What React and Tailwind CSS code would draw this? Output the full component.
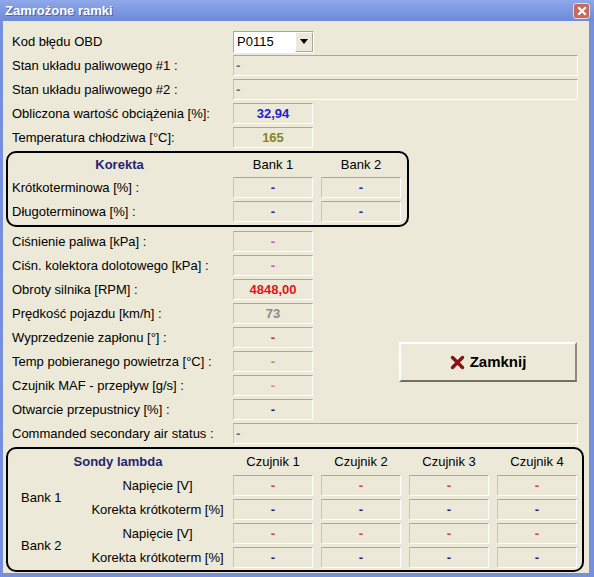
const Box = ({ children, className = '', w = 'w-[80px]', left = false }) => (
  <div
    className={`${w} h-[21px] shrink-0 flex items-center ${left ? 'justify-start pl-[2px]' : 'justify-center'} border border-t-[#aca899] border-l-[#c9c6b5] border-b-white border-r-white bg-[#ece9d8] font-bold text-[13px] ${className}`}
  >
    {children}
  </div>
);

const Row = ({ label, children }) => (
  <div className="flex items-center h-[21px]">
    <div className="w-[221px] shrink-0 whitespace-nowrap">{label}</div>
    {children}
  </div>
);

const dash = '-';

const mainRows = [
  { label: 'Ciśnienie paliwa [kPa] :', value: dash, color: 'text-[#c84bc8]' },
  { label: 'Ciśn. kolektora dolotowego [kPa] :', value: dash, color: 'text-[#c84bc8]' },
  { label: 'Obroty silnika [RPM] :', value: '4848,00', color: 'text-[#e0141c]' },
  { label: 'Prędkość pojazdu [km/h] :', value: '73', color: 'text-[#8a8a8a]' },
  { label: 'Wyprzedzenie zapłonu [°] :', value: dash, color: 'text-[#d02828]' },
  { label: 'Temp pobieranego powietrza [°C] :', value: dash, color: 'text-[#9a9a4a]' },
  { label: 'Czujnik MAF - przepływ [g/s] :', value: dash, color: 'text-[#e8884a]' },
  { label: 'Otwarcie przepustnicy [%] :', value: dash, color: 'text-[#1e1e8a]' },
];

const App = () => {
  return (
    <div className="w-[594px] h-[577px] bg-[#7591de] font-['Liberation_Sans',Arial,sans-serif] text-[13px] text-black overflow-hidden flex flex-col">
      {/* title bar */}
      <div className="h-[21px] shrink-0 flex items-center justify-between bg-gradient-to-b from-[#8ea8ea] to-[#6e8ad9] pl-[5px] pr-[4px]">
        <span className="text-white font-bold text-[13px] [text-shadow:1px_1px_0_#4a63b0]">Zamrożone ramki</span>
        <div className="w-[17px] h-[16px] rounded-[3px] border border-[#e8d8e0] bg-[#c66a5c] flex items-center justify-center">
          <svg width="10" height="10" viewBox="0 0 10 10">
            <path d="M2 2 L8 8 M8 2 L2 8" stroke="white" strokeWidth="2.2" strokeLinecap="square" />
          </svg>
        </div>
      </div>

      {/* body */}
      <div className="flex-1 ml-[3px] mr-[5px] mb-[4px] bg-[#ece9d8] pl-[9px] pt-[10px] flex flex-col">
        <div className="flex flex-col gap-[3px]">
          <Row label="Kod błędu OBD">
            <div className="w-[81px] h-[22px] flex border border-t-[#aca899] border-l-[#aca899] border-b-white border-r-white bg-white">
              <div className="flex-1 flex items-center pl-[3px]">P0115</div>
              <div className="w-[18px] h-full flex items-center justify-center bg-[#ece9d8] border border-t-white border-l-white border-b-[#aca899] border-r-[#aca899]">
                <svg width="8" height="5" viewBox="0 0 8 5">
                  <path d="M0 0 H8 L4 5 Z" fill="black" />
                </svg>
              </div>
            </div>
          </Row>
          <Row label="Stan układu paliwowego #1 :">
            <Box w="w-[345px]" left className="text-[#2e7f86]">{dash}</Box>
          </Row>
          <Row label="Stan układu paliwowego #2 :">
            <Box w="w-[345px]" left className="text-[#2e7f86]">{dash}</Box>
          </Row>
          <Row label="Obliczona wartość obciążenia [%]:">
            <Box className="text-[#1c22c8]">32,94</Box>
          </Row>
          <Row label="Temperatura chłodziwa [°C]:">
            <Box className="text-[#85852a]">165</Box>
          </Row>
        </div>

        {/* Korekta group */}
        <div className="ml-[-6px] mt-[3px] w-[403px] border-2 border-black rounded-[10px] pl-[4px] pb-[3px] flex flex-col">
          <div className="h-[24px] flex items-center">
            <div className="w-[221px] pr-[6px] text-center font-bold text-[#242470]">Korekta</div>
            <div className="w-[80px] text-center">Bank 1</div>
            <div className="w-[80px] ml-[8px] text-center">Bank 2</div>
          </div>
          <div className="flex flex-col gap-[3px]">
            <Row label="Krótkoterminowa [%] :">
              <Box className="text-[#22229a]">{dash}</Box>
              <Box className="ml-[8px] text-[#22229a]">{dash}</Box>
            </Row>
            <Row label="Długoterminowa [%] :">
              <Box className="text-[#22229a]">{dash}</Box>
              <Box className="ml-[8px] text-[#22229a]">{dash}</Box>
            </Row>
          </div>
        </div>

        {/* main rows + close button */}
        <div className="mt-[4px] flex">
          <div className="flex flex-col gap-[3px]">
            {mainRows.map(r => (
              <Row key={r.label} label={r.label}>
                <Box className={r.color}>{r.value}</Box>
              </Row>
            ))}
          </div>
          <button className="ml-[86px] mt-[111px] w-[178px] h-[40px] flex items-center justify-center gap-[5px] bg-[#ece9d8] border-2 border-t-white border-l-white border-b-[#716f64] border-r-[#8e8b7c] font-bold text-[15px]">
            <svg width="15" height="15" viewBox="0 0 15 15">
              <path d="M2.5 2.5 L12.5 12.5 M12.5 2.5 L2.5 12.5" stroke="#8a1212" strokeWidth="3.4" strokeLinecap="round" />
            </svg>
            Zamknij
          </button>
        </div>

        <div className="mt-[3px]">
          <Row label="Commanded secondary air status :">
            <Box w="w-[345px]" left className="text-[#2e7f86]">{dash}</Box>
          </Row>
        </div>

        {/* Sondy lambda group */}
        <div className="ml-[-6px] mt-[3px] w-[578px] border-2 border-black rounded-[10px] pb-[2px] flex flex-col">
          <div className="h-[26px] flex items-center">
            <div className="w-[225px] pr-[5px] text-center font-bold text-[#242470]">Sondy lambda</div>
            {['Czujnik 1', 'Czujnik 2', 'Czujnik 3', 'Czujnik 4'].map((c, i) => (
              <div key={c} className={`w-[80px] text-center ${i > 0 ? 'ml-[8px]' : ''}`}>{c}</div>
            ))}
          </div>
          {['Bank 1', 'Bank 2'].map((bank, bi) => (
            <div key={bank} className={`flex ${bi > 0 ? 'mt-[3px]' : ''}`}>
              <div className="w-[77px] pl-[13px] flex items-center">{bank}</div>
              <div className="flex flex-col gap-[3px]">
                {[
                  { label: 'Napięcie [V]', color: 'text-[#d83a3a]' },
                  { label: 'Korekta krótkoterm [%]', color: 'text-[#1e1e8a]' },
                ].map(s => (
                  <div key={s.label} className="flex items-center h-[21px]">
                    <div className="w-[145px] text-center whitespace-nowrap">{s.label}</div>
                    <div className="ml-[3px] flex gap-[8px]">
                      {[0, 1, 2, 3].map(k => (
                        <Box key={k} className={s.color}>{dash}</Box>
                      ))}
                    </div>
                  </div>
                ))}
              </div>
            </div>
          ))}
        </div>
      </div>
    </div>
  );
};

export default App;
